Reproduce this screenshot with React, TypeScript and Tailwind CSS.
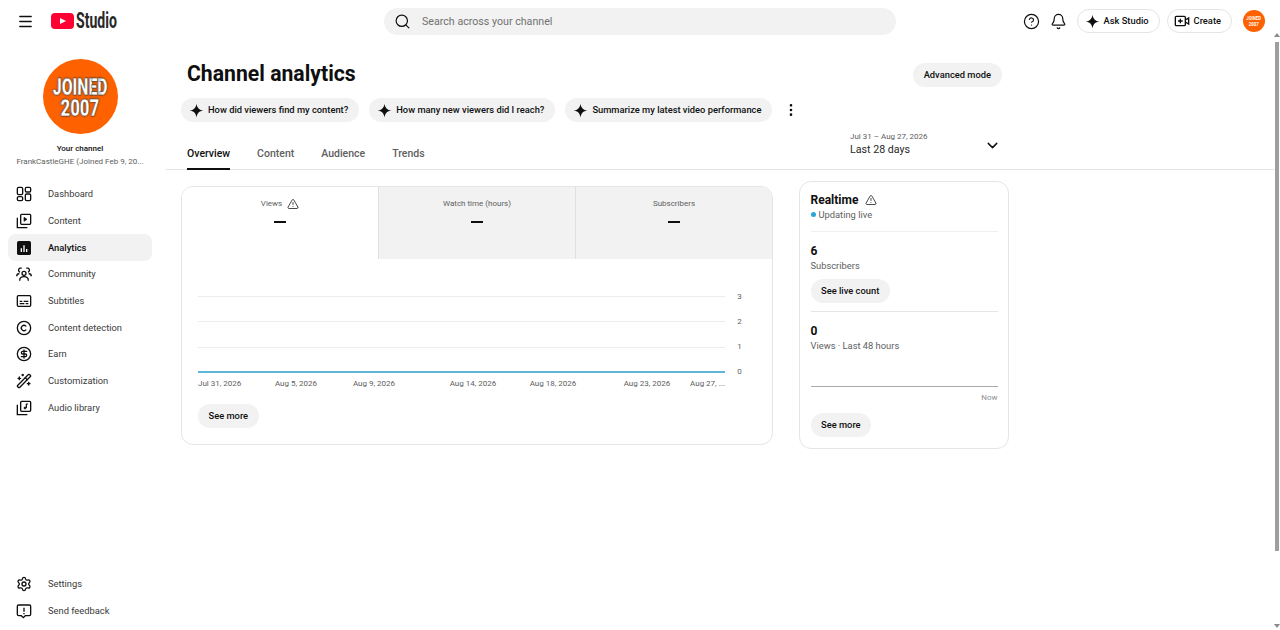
import type { ReactNode } from "react"
import {
  Bell,
  ChevronDown,
  CircleDollarSign,
  CircleHelp,
  Copyright,
  EllipsisVertical,
  Menu,
  Search,
  Settings,
  TriangleAlert,
  WandSparkles,
} from "lucide-react"

const Sparkle = ({ className }: { className: string }) => (
  <svg viewBox="0 0 24 24" className={className} fill="#0f0f0f">
    <path d="M12 1c.9 6.600 4.400 10.100 11 11-6.600.9-10.100 4.400-11 11-.9-6.600-4.400-10.100-11-11 6.600-.9 10.100-4.400 11-11z" />
  </svg>
)

const Icon = ({ children }: { children: ReactNode }) => (
  <svg viewBox="0 0 24 24" className="w-4 h-4 shrink-0" fill="none" stroke="#0f0f0f" strokeWidth="2">
    {children}
  </svg>
)

const navItems: { label: string; active?: boolean; icon: ReactNode }[] = [
  {
    label: "Dashboard",
    icon: (
      <Icon>
        <rect x="2" y="2" width="8" height="11" rx="2" />
        <rect x="14" y="2" width="8" height="7" rx="2" />
        <rect x="2" y="16" width="8" height="6" rx="2" />
        <rect x="14" y="12" width="8" height="10" rx="2" />
      </Icon>
    ),
  },
  {
    label: "Content",
    icon: (
      <Icon>
        <rect x="7" y="2" width="15" height="15" rx="1.500" />
        <path d="M2 7v15h15" />
        <path d="M12 6.500v6l4.500-3z" fill="#0f0f0f" strokeWidth="1" />
      </Icon>
    ),
  },
  {
    label: "Analytics",
    active: true,
    icon: (
      <svg viewBox="0 0 24 24" className="w-4 h-4 shrink-0">
        <rect x="1.500" y="1.500" width="21" height="21" rx="2.500" fill="#0f0f0f" />
        <path d="M7 12.500h2V18H7zM11 8h2v10h-2zM15 13.500h2V18h-2z" fill="#fff" />
      </svg>
    ),
  },
  {
    label: "Community",
    icon: (
      <Icon>
        <circle cx="12" cy="11" r="3" />
        <path d="M5.500 22c0-4 3-6 6.500-6s6.500 2 6.500 6" />
        <path d="M8.500 3.600a3 3 0 1 0-2.500 5.400M1 15.500c0-2.500 1.700-4 4-4.300" />
        <path d="M15.500 3.600a3 3 0 1 1 2.500 5.400M23 15.500c0-2.500-1.700-4-4-4.300" />
      </Icon>
    ),
  },
  {
    label: "Subtitles",
    icon: (
      <Icon>
        <rect x="2" y="4" width="20" height="16" rx="1.500" />
        <path d="M5.500 12.500h4M11.500 12.500h7M5.500 16h7M14.500 16h4" strokeWidth="1.800" />
      </Icon>
    ),
  },
  { label: "Content detection", icon: <Copyright className="w-4 h-4 shrink-0 text-[#0f0f0f]" /> },
  { label: "Earn", icon: <CircleDollarSign className="w-4 h-4 shrink-0 text-[#0f0f0f]" /> },
  { label: "Customization", icon: <WandSparkles className="w-4 h-4 shrink-0 text-[#0f0f0f]" /> },
  {
    label: "Audio library",
    icon: (
      <Icon>
        <rect x="7" y="2" width="15" height="15" rx="1.500" />
        <path d="M2 7v15h15" />
        <path d="M15.500 5.500V12" strokeWidth="1.800" />
        <circle cx="13.500" cy="12" r="1.500" fill="#0f0f0f" strokeWidth="1.200" />
        <path d="M15.500 6h2.500" strokeWidth="1.800" />
      </Icon>
    ),
  },
]

const NavRow = ({ label, icon, active }: { label: string; icon: ReactNode; active?: boolean }) => (
  <div
    className={`ml-2 mr-[14px] h-[26.670px] rounded-lg flex items-center pl-2 gap-[16px] text-[9.330px] ${
      active ? "bg-[#f2f2f2] text-[#0f0f0f] font-medium" : "text-[#3a3a3a]"
    }`}
  >
    {icon}
    <span>{label}</span>
  </div>
)

const Chip = ({ label }: { label: string }) => (
  <div className="h-6 rounded-full bg-[#f2f2f2] flex items-center pl-[8px] pr-[11px] gap-[4px] text-[#0f0f0f] text-[9.330px] font-medium whitespace-nowrap">
    <Sparkle className="w-[15px] h-[15px]" />
    {label}
  </div>
)

const PillButton = ({ label }: { label: string }) => (
  <div className="h-6 w-fit px-[10.500px] rounded-full bg-[#f2f2f2] flex items-center text-[#0f0f0f] text-[9.330px] font-medium whitespace-nowrap">
    {label}
  </div>
)

const MetricTab = ({ label, active, warn }: { label: string; active?: boolean; warn?: boolean }) => (
  <div
    className={`flex-1 h-[72px] flex flex-col items-center pt-[9px] ${
      active ? "bg-white" : "bg-[#f2f2f2] border-l border-[#e0e0e0]"
    }`}
  >
    <div className="h-[16px] flex items-center gap-[5px] text-[8px] text-[#606060]">
      {label}
      {warn && <TriangleAlert className="w-3 h-3 text-[#0f0f0f]" strokeWidth={1.500} />}
    </div>
    <div className="mt-[9px] w-3 h-[2px] bg-[#0f0f0f]" />
  </div>
)

const dateLabels = [
  { x: 198, text: "Jul 31, 2026", anchor: "start" },
  { x: 296, text: "Aug 5, 2026", anchor: "middle" },
  { x: 374, text: "Aug 9, 2026", anchor: "middle" },
  { x: 473, text: "Aug 14, 2026", anchor: "middle" },
  { x: 553, text: "Aug 18, 2026", anchor: "middle" },
  { x: 647, text: "Aug 23, 2026", anchor: "middle" },
  { x: 725, text: "Aug 27, ...", anchor: "end" },
] as const

// chart coordinates follow the page, the svg starts at x=182
const Chart = () => (
  <svg viewBox="182 276 590 118" className="w-[590px] h-[118px] block" fontFamily="Roboto, sans-serif">
    {[296.500, 321.500, 347.500].map((y) => (
      <line key={y} x1="198" x2="725" y1={y} y2={y} stroke="#ececec" />
    ))}
    {[3, 2, 1, 0].map((n, i) => (
      <text key={n} x="739.500" y={298.500 + i * 25.200} textAnchor="middle" fontSize="8" fill="#606060">
        {n}
      </text>
    ))}
    <line x1="198" x2="725" y1="372" y2="372" stroke="#5fb8d8" strokeWidth="2" />
    {dateLabels.map((d) => (
      <text key={d.text} x={d.x} y="386" textAnchor={d.anchor} fontSize="8" fill="#606060">
        {d.text}
      </text>
    ))}
  </svg>
)

const Avatar = () => (
  <div className="w-[75px] h-[75px] rounded-full bg-[#fe6200] flex flex-col items-center justify-center font-black text-white leading-[21px] text-[18px] [-webkit-text-stroke:0.300px_#333] [text-shadow:0_0_2px_#333]">
    <span className="scale-x-[0.88] scale-y-[1.3]">JOINED</span>
    <span className="scale-x-[0.93] scale-y-[1.3]">2007</span>
  </div>
)

export default function App() {
  return (
    <div className="relative w-[1280px] h-[630px] overflow-hidden bg-white font-['Roboto',sans-serif]">
      {/* Top bar */}
      <header className="h-[42px] flex items-center">
        <div className="w-[380px] flex items-center pl-[17px]">
          <Menu className="w-[17px] h-[17px] text-[#0f0f0f]" />
          <svg viewBox="0 0 23 16" className="ml-[17px] w-[23px] h-4">
            <rect width="23" height="16" rx="4" fill="#ff0033" />
            <path d="M9 5l6 3-6 3z" fill="#fff" />
          </svg>
          <span className="ml-[2px] text-[22px] font-bold text-[#282828] leading-none scale-x-[0.64] origin-left">Studio</span>
        </div>
        <div className="mt-px ml-[4px] w-[512px] h-[27px] rounded-full bg-[#f2f2f2] flex items-center pl-[10px] gap-[11px] text-[10.670px] text-[#717171]">
          <Search className="w-[17px] h-[17px] text-[#0f0f0f]" strokeWidth={1.700} />
          Search across your channel
        </div>
        <div className="ml-auto flex items-center pr-[15px]">
          <CircleHelp className="w-[17px] h-[17px] text-[#0f0f0f]" strokeWidth={1.700} />
          <Bell className="ml-[10px] w-[17px] h-[17px] text-[#0f0f0f]" strokeWidth={1.700} />
          <div className="ml-[10px] h-6 rounded-full border border-[#e5e5e5] flex items-center pl-[7px] pr-[10px] gap-[4px] text-[9.330px] font-medium text-[#0f0f0f]">
            <Sparkle className="w-[15px] h-[15px]" />
            Ask Studio
          </div>
          <div className="ml-[7px] h-6 rounded-full border border-[#e5e5e5] flex items-center pl-[6px] pr-[10px] gap-[4px] text-[9.330px] font-medium text-[#0f0f0f]">
            <svg viewBox="0 0 24 24" className="w-4 h-4" fill="none" stroke="#0f0f0f" strokeWidth="2">
              <rect x="2" y="5" width="15" height="14" rx="1.500" />
              <path d="M9.500 8.500v7M6 12h7M17 10.500l5-3v9l-5-3" />
            </svg>
            Create
          </div>
          <div className="ml-[11px] w-[22px] h-[22px] rounded-full bg-[#fe6200] flex flex-col items-center justify-center text-white font-bold text-[5px] leading-[6px]">
            <span className="scale-x-[0.85] scale-y-[1.2]">JOINED</span>
            <span className="scale-x-[0.85] scale-y-[1.2]">2007</span>
          </div>
        </div>
      </header>

      <div className="flex h-[588px]">
        {/* Sidebar */}
        <aside className="w-[166px] shrink-0 flex flex-col">
          <div className="pt-[17px] flex flex-col items-center pr-[6px]">
            <Avatar />
            <div className="mt-[9px] text-[8px] font-medium text-[#0f0f0f] leading-[12px]">Your channel</div>
            <div className="mt-[1px] text-[8px] text-[#606060] leading-[12px] whitespace-nowrap">FrankCastleGHE (Joined Feb 9, 20...</div>
          </div>
          <nav className="mt-[13px]">
            {navItems.map((item) => (
              <NavRow key={item.label} {...item} />
            ))}
          </nav>
          <div className="mt-auto mb-[6px]">
            <NavRow label="Settings" icon={<Settings className="w-4 h-4 shrink-0 text-[#0f0f0f]" />} />
            <NavRow
              label="Send feedback"
              icon={
                <Icon>
                  <path d="M4 3h16a2 2 0 0 1 2 2v12a2 2 0 0 1-2 2h-6l-3 3-3-3H4a2 2 0 0 1-2-2V5a2 2 0 0 1 2-2z" />
                  <path d="M12 7v6M12 15v2" />
                </Icon>
              }
            />
          </div>
        </aside>

        {/* Main */}
        <main className="flex-1 min-w-0 pr-[6px]">
          <div className="h-[128px] border-b border-[#e5e5e5]">
            <div className="flex items-center justify-between pl-[21px] pr-[272px] pt-[16px] h-[47px]">
              <h1 className="text-[21.200px] leading-[30px] font-bold text-[#0f0f0f]">Channel analytics</h1>
              <div className="mt-[3px] h-6 px-[11px] rounded-full bg-[#f2f2f2] flex items-center text-[#0f0f0f] text-[9.330px] font-medium">Advanced mode</div>
            </div>
            <div className="mt-[9px] pl-[15px] flex items-center gap-[10px]">
              <Chip label="How did viewers find my content?" />
              <Chip label="How many new viewers did I reach?" />
              <Chip label="Summarize my latest video performance" />
              <EllipsisVertical className="ml-[1px] w-4 h-4 text-[#0f0f0f]" />
            </div>
            <div className="mt-[8px] pl-[21px] pr-[272px] flex items-end justify-between h-[40px]">
              <div className="flex gap-[27px] text-[10.500px] font-medium text-[#606060]">
                <div className="h-[34px] pt-[10px] border-b-2 border-[#0f0f0f] text-[#0f0f0f]">Overview</div>
                <div className="h-[34px] pt-[10px]">Content</div>
                <div className="h-[34px] pt-[10px]">Audience</div>
                <div className="h-[34px] pt-[10px]">Trends</div>
              </div>
              <div className="w-[152px] h-[40px] flex items-center justify-between pr-[1px] mb-[7px]">
                <div>
                  <div className="text-[8px] leading-[12px] text-[#606060]">Jul 31 – Aug 27, 2026</div>
                  <div className="text-[10.670px] leading-[13px] text-[#282828]">Last 28 days</div>
                </div>
                <ChevronDown className="mt-[4px] w-[17px] h-[17px] text-[#0f0f0f]" />
              </div>
            </div>
          </div>

          <div className="pl-[15px] flex items-start gap-[26px]">
            {/* Overview card */}
            <section className="mt-[16px] w-[592px] h-[259px] rounded-xl border border-[#e5e5e5] overflow-hidden">
              <div className="flex">
                <MetricTab label="Views" active warn />
                <MetricTab label="Watch time (hours)" />
                <MetricTab label="Subscribers" />
              </div>
              <div className="mt-[17px]">
                <Chart />
              </div>
              <div className="mt-[10px] pl-[16px]">
                <PillButton label="See more" />
              </div>
            </section>

            {/* Realtime card */}
            <section className="mt-[11px] w-[210px] h-[268px] rounded-xl border border-[#e5e5e5] px-[10.500px] pt-[10px]">
              <div className="flex items-center gap-[7px] text-[12px] leading-[16px] font-bold text-[#0f0f0f]">
                Realtime
                <TriangleAlert className="w-3 h-3" strokeWidth={1.500} />
              </div>
              <div className="flex items-center gap-[3px] text-[9.330px] leading-[13px] text-[#606060]">
                <span className="w-[5px] h-[5px] rounded-full bg-[#29a7d8]" />
                Updating live
              </div>
              <div className="mt-[10px] border-t border-[#efefef] pt-[12px]">
                <div className="text-[12px] leading-[14px] font-bold text-[#0f0f0f]">6</div>
                <div className="mt-[1px] text-[9.330px] leading-[14px] text-[#606060]">Subscribers</div>
                <div className="mt-[6px]">
                  <PillButton label="See live count" />
                </div>
              </div>
              <div className="mt-[8px] border-t border-[#e5e5e5] pt-[12px]">
                <div className="text-[12px] leading-[14px] font-bold text-[#0f0f0f]">0</div>
                <div className="mt-[1px] text-[9.330px] leading-[14px] text-[#606060]">Views · Last 48 hours</div>
              </div>
              <div className="mt-[33px] border-t border-[#aaaaaa] pt-[5px] text-right text-[8px] leading-[12px] text-[#909090]">Now</div>
              <div className="mt-[9px]">
                <PillButton label="See more" />
              </div>
            </section>
          </div>
        </main>
      </div>

      {/* Page scrollbar */}
      <svg viewBox="0 0 6 4" className="absolute right-[0px] top-[33px] w-[6px] h-[4px]">
        <path d="M3 0l3 4H0z" fill="#8a8a8a" />
      </svg>
      <div className="absolute right-[1px] top-[42px] w-[4px] h-[509px] bg-[#9e9e9e]" />
      <svg viewBox="0 0 6 4" className="absolute right-[0px] bottom-[2px] w-[6px] h-[4px]">
        <path d="M3 4l3-4H0z" fill="#8a8a8a" />
      </svg>
    </div>
  )
}
